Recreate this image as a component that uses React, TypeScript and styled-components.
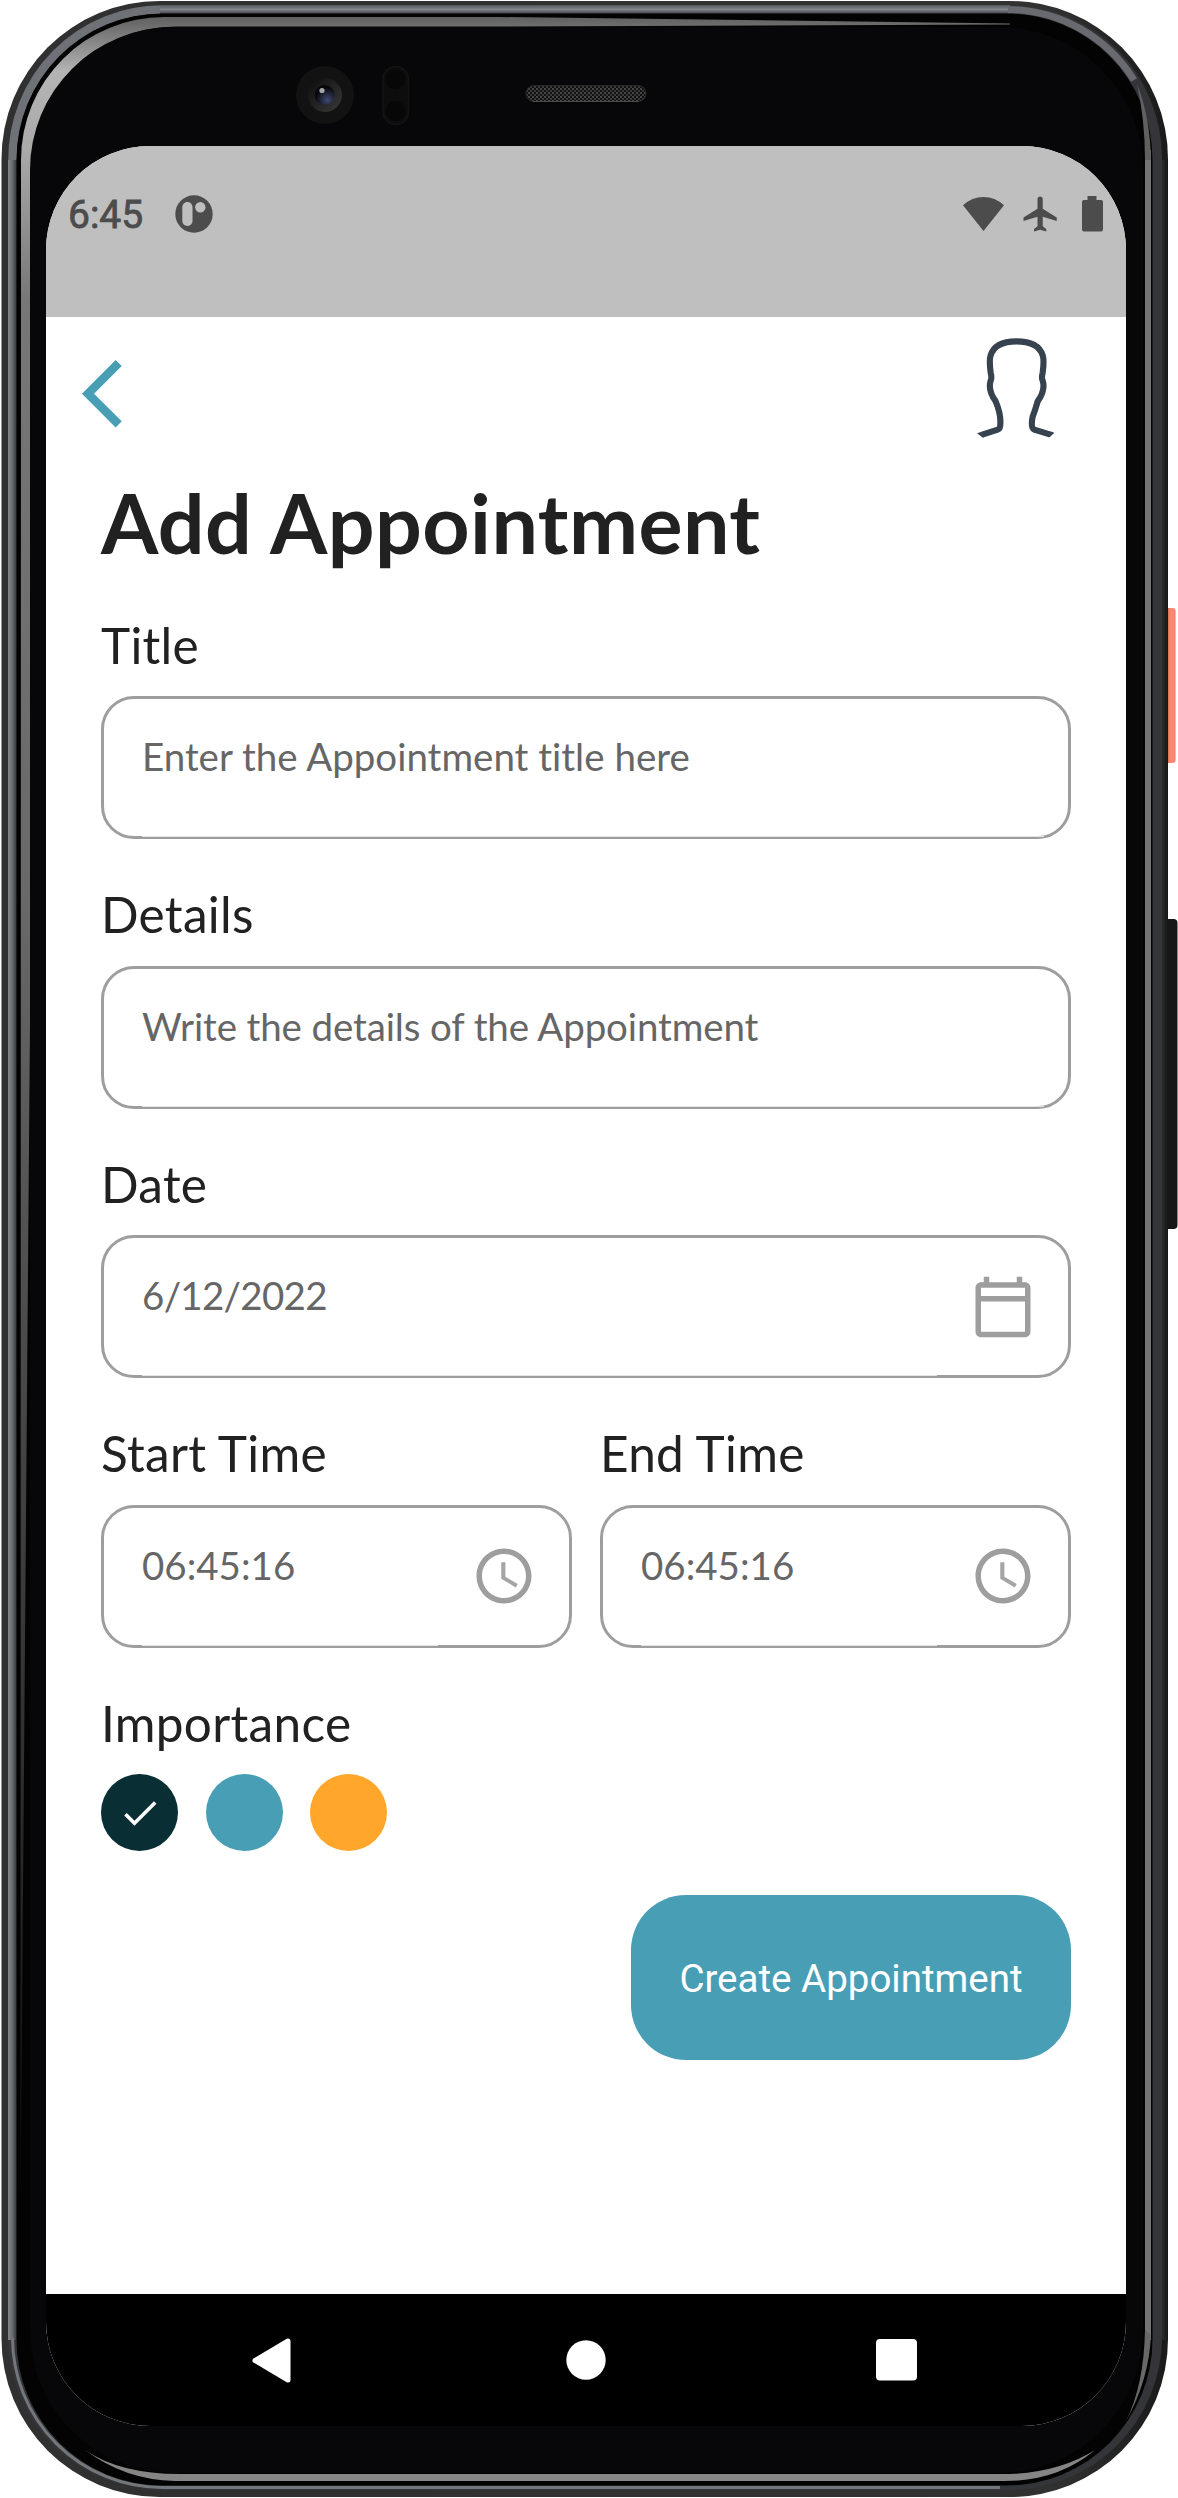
import React, { useState } from 'react';
import styled, { createGlobalStyle } from 'styled-components';

const teal = '#489fb5';
const grey = '#9e9e9e';

const GlobalStyle = createGlobalStyle`
  * { box-sizing: border-box; }
  html, body { margin: 0; padding: 0; background: #fff; }
  button { border: 0; padding: 0; background: none; font: inherit; cursor: pointer; }
`;

const Device = styled.div`
  position: relative;
  width: 1178px;
  height: 2498px;
  padding: 146px 52px 72px 46px;
  overflow: hidden;
`;

const FrameArt = styled.svg`
  position: absolute;
  inset: 0;
`;

const Screen = styled.div`
  position: relative;
  display: flex;
  flex-direction: column;
  width: 1080px;
  height: 2280px;
  border-radius: 104px;
  overflow: hidden;
  background: #fff;
`;

const StatusBar = styled.div`
  display: flex;
  align-items: flex-start;
  justify-content: space-between;
  height: 171px;
  padding: 45px 22px 0 22px;
  background: #bfbfbf;
`;

const StatusGroup = styled.div<{ $gap: number }>`
  display: flex;
  align-items: center;
  height: 45px;
  gap: ${(p) => p.$gap}px;
`;

const Clock = styled.span`
  width: 76px;
  padding-top: 4px;
  font: 400 39px/45px Roboto, sans-serif;
  -webkit-text-stroke: 0.8px #4c4c4c;
  color: #4c4c4c;
`;

const Header = styled.header`
  display: flex;
  align-items: flex-start;
  justify-content: space-between;
  height: 155.6px;
  padding: 18px 66px 0 32px;
`;

const BackButton = styled.button`
  margin-top: 22px;
  line-height: 0;
`;

const Form = styled.main`
  flex: 1;
  padding: 0 55px;
  font-family: Lato, sans-serif;
  font-variant-ligatures: none;
`;

const Heading = styled.h1`
  margin: 0;
  font-size: 82.5px;
  line-height: 99px;
  font-weight: 700;
  letter-spacing: 0.42px;
  color: #212121;
  white-space: nowrap;
`;

const Group = styled.section<{ $top?: number }>`
  margin-top: ${(p) => p.$top ?? 45.8}px;
`;

const Label = styled.div`
  margin-bottom: 21.3px;
  font-size: 49.5px;
  line-height: 59.4px;
  letter-spacing: 0.3px;
  color: #212121;
  white-space: nowrap;
`;

const Box = styled.div`
  display: flex;
  align-items: center;
  height: 143px;
  padding: 0 32.5px 0 38px;
  border: 3px solid ${grey};
  border-radius: 33px;
`;

const Value = styled.div<{ $reach: number; $tracking: number }>`
  flex: 1;
  align-self: stretch;
  margin: 0 ${(p) => p.$reach}px -1px 0;
  padding-top: 34px;
  border-bottom: 1px solid #e4e4e4;
  font-size: 38.5px;
  line-height: 46px;
  letter-spacing: ${(p) => p.$tracking}px;
  color: #666;
  white-space: nowrap;
`;

const Pair = styled.div`
  display: grid;
  grid-template-columns: 1fr 1fr;
  column-gap: 28px;
`;

const Swatches = styled.div`
  display: flex;
  gap: 27.5px;
`;

const Swatch = styled.button<{ $color: string }>`
  display: flex;
  align-items: center;
  justify-content: center;
  width: 77px;
  height: 77px;
  border-radius: 50%;
  background: ${(p) => p.$color};
`;

const Actions = styled.div`
  display: flex;
  justify-content: flex-end;
  margin-top: 43.8px;
`;

const CreateButton = styled.button`
  width: 440px;
  height: 165px;
  padding-top: 2px;
  border-radius: 55px;
  background: ${teal};
  color: #fff;
  font: 400 38.5px/45px Roboto, sans-serif;
  white-space: nowrap;
`;

const NavBar = styled.nav`
  display: flex;
  align-items: center;
  justify-content: space-between;
  height: 132px;
  padding: 0 209px 0 206px;
  background: #000;
`;

const HomeIcon = styled.svg`
  margin-left: 5px;
`;

const CalendarIcon = () => (
  <svg width="66" height="66" viewBox="0 0 24 24" fill={grey}>
    <path d="M20 3h-1V1h-2v2H7V1H5v2H4c-1.1 0-2 .9-2 2v16c0 1.1.9 2 2 2h16c1.1 0 2-.9 2-2V5c0-1.1-.9-2-2-2zm0 18H4V10h16v11zm0-13H4V5h16v3z" />
  </svg>
);

const TimeIcon = () => (
  <svg width="66" height="66" viewBox="0 0 24 24" fill={grey}>
    <path d="M11.99 2C6.47 2 2 6.48 2 12s4.47 10 9.99 10C17.52 22 22 17.52 22 12S17.52 2 11.99 2zM12 20c-4.42 0-8-3.58-8-8s3.58-8 8-8 8 3.58 8 8-3.58 8-8 8z" />
    <path fillOpacity=".93" d="M12.5 7H11v6l5.25 3.15.75-1.23-4.5-2.67z" />
  </svg>
);

type FieldProps = {
  label: string;
  value: string;
  icon?: React.ReactNode;
  top?: number;
  tracking?: number;
};

const Field = ({ label, value, icon, top, tracking = 0 }: FieldProps) => (
  <Group $top={top}>
    <Label>{label}</Label>
    <Box>
      <Value $reach={icon ? 33 : -8} $tracking={tracking}>
        {value}
      </Value>
      {icon}
    </Box>
  </Group>
);

const PhoneFrame = () => (
  <FrameArt width="1178" height="2498" viewBox="0 0 1178 2498">
    <defs>
      <linearGradient id="rim" x1="0" y1="0" x2="1" y2="0">
        <stop offset="0" stopColor="#2f302f" />
        <stop offset=".9" stopColor="#303130" />
        <stop offset="1" stopColor="#1a1a1b" />
      </linearGradient>
      <linearGradient id="steelLeft" x1="8" y1="0" x2="17" y2="0" gradientUnits="userSpaceOnUse">
        <stop offset="0" stopColor="#85888e" />
        <stop offset=".5" stopColor="#66696e" />
        <stop offset="1" stopColor="#303235" />
      </linearGradient>
      <linearGradient id="steelTop" x1="0" y1="5" x2="0" y2="14" gradientUnits="userSpaceOnUse">
        <stop offset="0" stopColor="#55575b" />
        <stop offset=".5" stopColor="#85868c" />
        <stop offset="1" stopColor="#3c3d41" />
      </linearGradient>
      <linearGradient id="glare" x1="0" y1="17" x2="0" y2="2200" gradientUnits="userSpaceOnUse">
        <stop offset="0" stopColor="#606060" />
        <stop offset=".025" stopColor="#b4b4b4" />
        <stop offset=".06" stopColor="#aaa" />
        <stop offset=".13" stopColor="#777" />
        <stop offset=".4" stopColor="#696969" />
        <stop offset="1" stopColor="#111" />
      </linearGradient>
      <linearGradient id="side" x1="1151" y1="0" x2="1168" y2="0" gradientUnits="userSpaceOnUse">
        <stop offset="0" stopColor="#050505" />
        <stop offset=".2" stopColor="#1a1b1d" />
        <stop offset=".5" stopColor="#303134" />
        <stop offset=".75" stopColor="#252628" />
        <stop offset="1" stopColor="#161616" />
      </linearGradient>
      <linearGradient id="power" x1="1167" y1="0" x2="1176" y2="0" gradientUnits="userSpaceOnUse">
        <stop offset="0" stopColor="#d95c43" />
        <stop offset=".3" stopColor="#f5866c" />
        <stop offset=".75" stopColor="#f58e74" />
        <stop offset="1" stopColor="#ff6648" />
      </linearGradient>
      <radialGradient id="lens" cx=".65" cy=".75" r=".6">
        <stop offset="0" stopColor="#3e4a72" />
        <stop offset="1" stopColor="#08080c" />
      </radialGradient>
      <linearGradient id="ring" x1="0" y1="0" x2="1" y2="1">
        <stop offset="0" stopColor="#0c0c0c" />
        <stop offset="1" stopColor="#3a3a3a" />
      </linearGradient>
      <pattern id="mesh" width="4" height="4" patternUnits="userSpaceOnUse">
        <rect width="4" height="4" fill="#111" />
        <rect width="2" height="2" fill="#464646" />
        <rect x="2" y="2" width="2" height="2" fill="#3a3a3a" />
      </pattern>
    </defs>
    <rect x="1162" y="608" width="13.5" height="155" rx="3" fill="url(#power)" />
    <rect x="1162" y="919" width="15.5" height="310" rx="4" fill="#171717" />
    <rect x="1.5" y="1" width="1166.5" height="2496" rx="158" fill="url(#rim)" />
    <rect x="1151" y="160" width="17" height="2180" fill="url(#side)" />
    {/* polished metal edge: left, top and the corners between */}
    <rect x="8" y="5" width="1154" height="2485" rx="153" fill="#333538" />
    <path d="M12.5 2340V160A150 150 0 0 1 162 9.5" fill="none" stroke="#6e7176" strokeWidth="8.5" />
    <rect x="8" y="160" width="9" height="2180" fill="url(#steelLeft)" />
    <rect x="160" y="5" width="850" height="9" fill="url(#steelTop)" />
    <path d="M1008 9.5A150 150 0 0 1 1134 80" fill="none" stroke="#696a70" strokeWidth="7" />
    <path d="M12.5 2338A150 150 0 0 0 162 2487.5H1000" fill="none" stroke="#73767a" strokeWidth="3" />
    <rect x="16.5" y="13.5" width="1136" height="2472" rx="146" fill="#030304" />
    {/* glass glare, tapering along the top and the left side */}
    <path d="M21 160A143 143 0 0 1 164 17H500L1010 23.5L1010 24.5L500 26.5H176A145 145 0 0 0 31 170V900L20.5 2200Z" fill="url(#glare)" />
    <rect x="1145" y="150" width="6" height="2190" fill="#747474" />
    <path d="M1137 84Q1150 116 1151 160H1145Q1145 120 1137 84Z" fill="#606060" />
    <path d="M1151 2335Q1149 2380 1126 2421Q1144 2385 1145 2330Z" fill="#686868" />
    <path d="M85 2450Q120 2474 180 2474H1010Q1060 2472 1095 2450Q1058 2481 1005 2481H175Q125 2480 85 2450Z" fill="#858585" />
    <rect x="30" y="27" width="1113" height="2446" rx="143" fill="#070709" />
    {/* front camera */}
    <circle cx="325" cy="95" r="29" fill="#121213" />
    <circle cx="325" cy="95" r="17" fill="url(#ring)" />
    <circle cx="324.5" cy="95" r="10" fill="url(#lens)" />
    <circle cx="322" cy="90.5" r="2.6" fill="#a5a5a5" />
    {/* proximity sensors */}
    <rect x="383" y="66.5" width="25.5" height="58" rx="12.7" fill="#0d0d0e" stroke="#141414" strokeWidth="1.5" />
    <circle cx="395.5" cy="79" r="10" fill="#070708" />
    <circle cx="395.5" cy="111" r="10" fill="#070708" />
    {/* earpiece */}
    <rect x="526" y="85.5" width="120" height="16" rx="8" fill="url(#mesh)" stroke="#292929" strokeWidth="1" />
    <path d="M533 101.5H639" stroke="#4a4a4a" />
  </FrameArt>
);

const levels = ['#092e34', teal, '#ffa62b'];

export default function App() {
  const [level, setLevel] = useState(0);
  return (
    <>
      <GlobalStyle />
      <Device>
        <PhoneFrame />
        <Screen>
          <StatusBar>
            <StatusGroup $gap={30.5}>
              <Clock>6:45</Clock>
              <svg width="38" height="38" viewBox="0 0 38 38">
                <circle cx="19" cy="19" r="18.7" fill="#4c4c4c" />
                <rect x="7.3" y="7" width="10.2" height="24" rx="5.1" fill="#bfbfbf" />
                <circle cx="25.3" cy="12.2" r="5.2" fill="#bfbfbf" />
              </svg>
            </StatusGroup>
            <StatusGroup $gap={15.5}>
              <svg width="41" height="34" viewBox="0 0 41 34">
                <path d="M0 8.3Q9 0 20.5 0T41 8.3L20.5 34Z" fill="#4c4c4c" />
              </svg>
              <svg width="42" height="42" viewBox="0 0 24 24" fill="#4c4c4c">
                <path d="M21 16v-2l-8-5V3.5c0-.83-.67-1.5-1.5-1.5S10 2.67 10 3.5V9l-8 5v2l8-2.5V19l-2 1.5V22l3.5-1 3.5 1v-1.5L13 19v-5.5l8 2.5z" />
              </svg>
              <svg width="27" height="36" viewBox="-9 0 27 36" fill="#4c4c4c">
                <path d="M1.5 0H10.5V4H15Q17 4 17 6V33.5Q17 35.5 15 35.5H-2Q-4 35.5-4 33.5V6Q-4 4-2 4H1.5Z" />
              </svg>
            </StatusGroup>
          </StatusBar>
          <Header>
            <BackButton aria-label="Back">
              <svg width="50" height="74" viewBox="78 357 50 74">
                <path d="M118.7 363L88 393.7L118.7 424.4" fill="none" stroke={teal} strokeWidth="8.6" />
              </svg>
            </BackButton>
            <svg width="87" height="107" viewBox="520 1005 261 321">
              <path
                d="M548 1304L594 1289Q602 1286 602 1272Q604 1242 588 1204Q564 1170 573 1142Q577 1135 573 1118Q568 1080 573 1066Q586 1024 650 1024Q716 1024 729 1066Q734 1080 729 1118Q725 1135 729 1142Q738 1170 714 1204Q706 1232 699 1250Q692 1284 704 1289L750 1303"
                fill="none"
                stroke="#37424f"
                strokeWidth="18.5"
              />
              <path
                d="M532 1300L546 1295L552 1312.5L550 1313ZM764 1298L752 1294L746 1311L750 1312Z"
                fill="#37424f"
              />
            </svg>
          </Header>
          <Form>
            <Heading>Add Appointment</Heading>
            <Field label="Title" value="Enter the Appointment title here" top={44} />
            <Field label="Details" value="Write the details of the Appointment" tracking={-0.13} />
            <Field label="Date" value="6/12/2022" icon={<CalendarIcon />} tracking={-0.7} />
            <Pair>
              <Field label="Start Time" value="06:45:16" icon={<TimeIcon />} />
              <Field label="End Time" value="06:45:16" icon={<TimeIcon />} />
            </Pair>
            <Group>
              <Label>Importance</Label>
              <Swatches>
                {levels.map((color, i) => (
                  <Swatch key={color} $color={color} onClick={() => setLevel(i)}>
                    {i === level && (
                      <svg width="44" height="44" viewBox="0 0 24 24" fill="#fff">
                        <path d="M9 16.2L4.8 12l-1.4 1.4L9 19 21 7l-1.4-1.4L9 16.2z" />
                      </svg>
                    )}
                  </Swatch>
                ))}
              </Swatches>
            </Group>
            <Actions>
              <CreateButton>Create Appointment</CreateButton>
            </Actions>
          </Form>
          <NavBar>
            <svg width="39" height="45" viewBox="0 0 39 45">
              <path d="M3 22.5L36 3V42Z" fill="#fff" stroke="#fff" strokeWidth="5" strokeLinejoin="round" />
            </svg>
            <HomeIcon width="40" height="40" viewBox="0 0 40 40">
              <circle cx="20" cy="20" r="19.7" fill="#fff" />
            </HomeIcon>
            <svg width="41" height="42" viewBox="0 0 41 42">
              <rect width="41" height="41.5" rx="4" fill="#fff" />
            </svg>
          </NavBar>
        </Screen>
      </Device>
    </>
  );
}
